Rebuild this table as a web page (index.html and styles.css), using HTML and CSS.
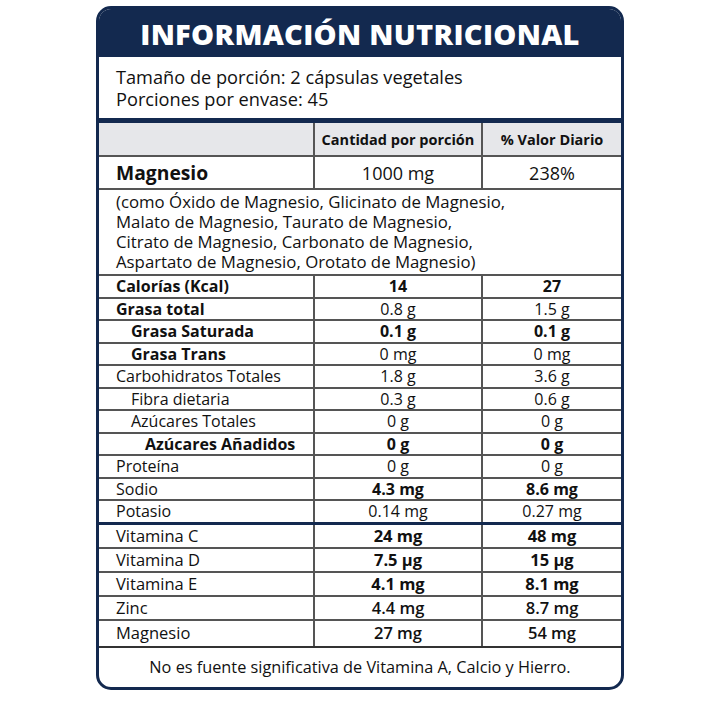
FILE: index.html
```html
<!DOCTYPE html>
<html lang="es">
<head>
<meta charset="utf-8">
<title>Información Nutricional</title>
<link rel="stylesheet" href="styles.css">
</head>
<body>
<div class="card">
  <div class="title">INFORMACIÓN NUTRICIONAL</div>
  <div class="serving">
    <div>Tamaño de porción: 2 cápsulas vegetales</div>
    <div>Porciones por envase: 45</div>
  </div>
  <table class="facts">
    <colgroup><col class="c1"><col class="c2"><col class="c3"></colgroup>
    <tr class="head"><td></td><td>Cantidad por porción</td><td>% Valor Diario</td></tr>
    <tr class="main"><td class="b">Magnesio</td><td>1000 mg</td><td>238%</td></tr>
    <tr class="desc"><td colspan="3">
      <div class="dl">(como Óxido de Magnesio, Glicinato de Magnesio,</div>
      <div class="dl">Malato de Magnesio, Taurato de Magnesio,</div>
      <div class="dl">Citrato de Magnesio, Carbonato de Magnesio,</div>
      <div class="dl">Aspartato de Magnesio, Orotato de Magnesio)</div>
    </td></tr>
    <tr class="r"><td class="b">Calorías (Kcal)</td><td class="b">14</td><td class="b">27</td></tr>
    <tr class="r"><td class="b">Grasa total</td><td>0.8 g</td><td>1.5 g</td></tr>
    <tr class="r"><td class="b i1">Grasa Saturada</td><td class="b">0.1 g</td><td class="b">0.1 g</td></tr>
    <tr class="r"><td class="b i1">Grasa Trans</td><td>0 mg</td><td>0 mg</td></tr>
    <tr class="r"><td>Carbohidratos Totales</td><td>1.8 g</td><td>3.6 g</td></tr>
    <tr class="r"><td class="i1">Fibra dietaria</td><td>0.3 g</td><td>0.6 g</td></tr>
    <tr class="r"><td class="i1">Azúcares Totales</td><td>0 g</td><td>0 g</td></tr>
    <tr class="r"><td class="b i2">Azúcares Añadidos</td><td class="b">0 g</td><td class="b">0 g</td></tr>
    <tr class="r"><td>Proteína</td><td>0 g</td><td>0 g</td></tr>
    <tr class="r"><td>Sodio</td><td class="b">4.3 mg</td><td class="b">8.6 mg</td></tr>
    <tr class="r last"><td>Potasio</td><td>0.14 mg</td><td>0.27 mg</td></tr>
    <tr class="v"><td>Vitamina C</td><td class="b">24 mg</td><td class="b">48 mg</td></tr>
    <tr class="v"><td>Vitamina D</td><td class="b">7.5 µg</td><td class="b">15 µg</td></tr>
    <tr class="v"><td>Vitamina E</td><td class="b">4.1 mg</td><td class="b">8.1 mg</td></tr>
    <tr class="v"><td>Zinc</td><td class="sb">4.4 mg</td><td class="sb">8.7 mg</td></tr>
    <tr class="v vlast"><td>Magnesio</td><td class="sb">27 mg</td><td class="sb">54 mg</td></tr>
  </table>
  <div class="foot">No es fuente significativa de Vitamina A, Calcio y Hierro.</div>
</div>
</body>
</html>
```

FILE: styles.css
```css
html, body {
  margin: 0;
  padding: 0;
  background: #ffffff;
}
body {
  padding-top: 6px;
  font-family: "Open Sans", "Liberation Sans", sans-serif;
  color: #111111;
}
.card {
  width: 528px;
  height: 684px;
  box-sizing: border-box;
  margin: 0 auto;
  border: 3px solid #13294f;
  border-radius: 15px;
  overflow: hidden;
  display: flex;
  flex-direction: column;
}
.title {
  background: #13294f;
  color: #ffffff;
  font-weight: 800;
  font-size: 29px;
  height: 48px;
  line-height: 49px;
  text-align: center;
  letter-spacing: 0.3px;
}
.serving {
  padding: 9px 0 8px 17px;
  font-size: 18.2px;
  line-height: 22px;
  border-bottom: 5px solid #13294f;
}
.facts {
  width: 100%;
  border-collapse: collapse;
  table-layout: fixed;
}
.c1 { width: 215px; }
.c2 { width: 168px; }
.facts td {
  border: 2px solid #555555;
  padding: 0;
  text-align: center;
  font-size: 16px;
  white-space: nowrap;
}
.facts tr td:first-child {
  border-left: none;
  text-align: left;
  padding-left: 17px;
}
.facts tr td:last-child { border-right: none; }
.facts tr:first-child td { border-top: none; }
.head td {
  background: #e6e7ea;
  height: 32px;
  font-weight: 700;
  font-size: 14.5px !important;
}
.main td {
  height: 31px;
  font-size: 18px !important;
}
.facts tr.main td:first-child { font-size: 19.3px !important; }
.desc td {
  height: 84px;
  font-size: 16.8px !important;
  white-space: normal;
}
.dl {
  height: 20px;
  line-height: 20px;
}
.r td { height: 20.5px; line-height: 20px; }
.r.last td { border-bottom: 3px solid #13294f; }
.v td { height: 22px; line-height: 22px; font-size: 16.5px !important; }
.vlast td { height: 25px; border-bottom: 2px solid #333333; }
.b { font-weight: 700; }
.sb { font-weight: 600; }
.facts tr td.i1 { padding-left: 32px; }
.facts tr td.i2 { padding-left: 46px; }
.foot {
  flex: 1;
  display: flex;
  align-items: center;
  justify-content: center;
  font-size: 16.3px;
}
```
